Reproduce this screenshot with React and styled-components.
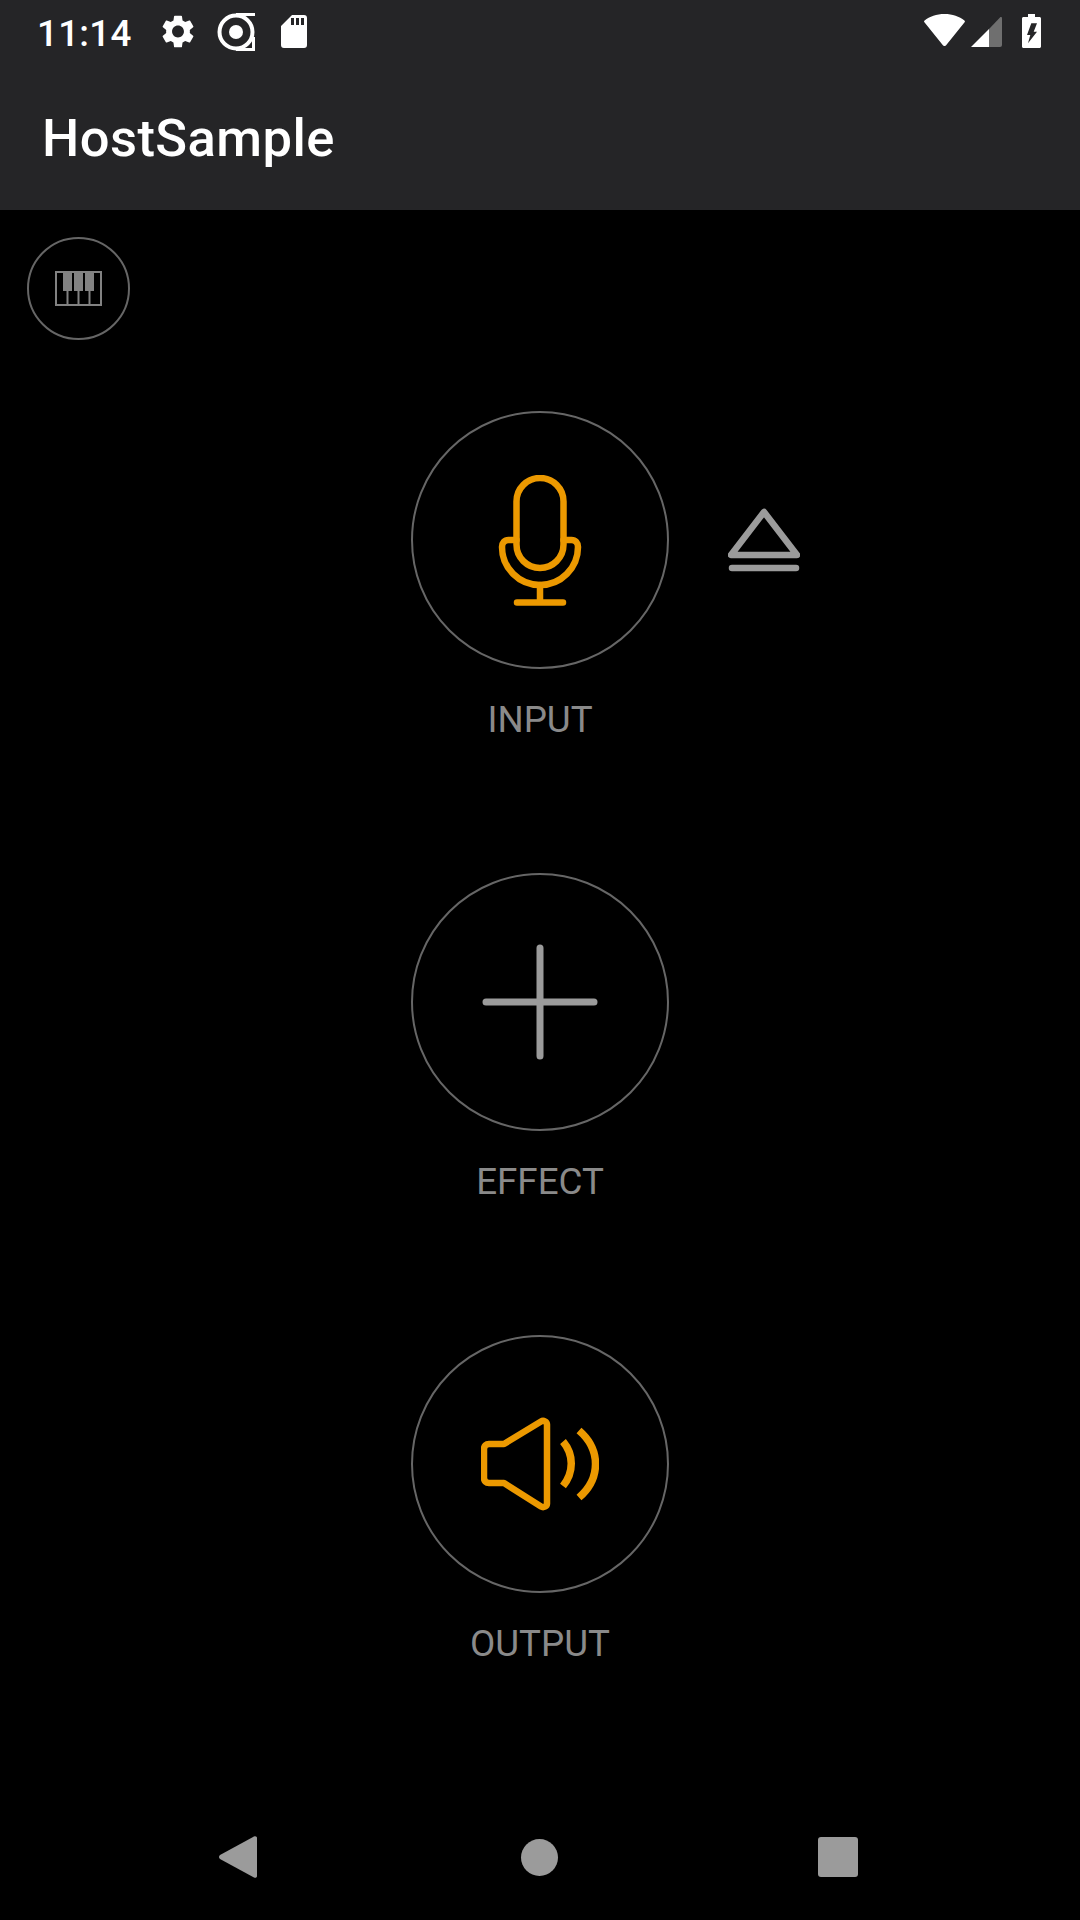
import styled, { createGlobalStyle } from 'styled-components'

const GlobalStyle = createGlobalStyle`
  html, body {
    margin: 0;
    padding: 0;
    background: #000;
  }
`

const Screen = styled.div`
  display: flex;
  flex-direction: column;
  width: 1080px;
  height: 1920px;
  overflow: hidden;
  background: #000;
  font-family: Roboto, "Liberation Sans", sans-serif;
`

const AppHeader = styled.header`
  flex: none;
  background: #252527;
  color: #fff;
`

const StatusBar = styled.div`
  display: flex;
  justify-content: space-between;
  height: 63px;
  padding: 0 39px 0 37px;
`

const StatusGroup = styled.div`
  display: flex;
  align-items: flex-start;
`

const Clock = styled.span`
  width: 93px;
  margin-top: 12px;
  font-size: 36.75px;
  line-height: 43px;
  font-weight: 500;
  letter-spacing: 0.3px;
  white-space: nowrap;
`

const StatusIcon = styled.svg`
  display: block;
  flex: none;
  margin-top: ${props => props.$top}px;
  margin-left: ${props => props.$left}px;
  fill: #fff;
`

const Toolbar = styled.div`
  display: flex;
  align-items: center;
  height: 147px;
  padding: 2px 0 0 42px;
  box-sizing: border-box;
`

const Title = styled.h1`
  margin: 0;
  font-size: 52.5px;
  font-weight: 500;
  line-height: 62px;
  letter-spacing: 0.45px;
`

const Content = styled.main`
  flex: 1;
  display: flex;
  flex-direction: column;
  min-height: 0;
`

const KeyboardButton = styled.button`
  display: flex;
  flex: none;
  align-items: center;
  justify-content: center;
  align-self: flex-start;
  box-sizing: border-box;
  width: 103px;
  height: 103px;
  margin: 27px 0 0 27px;
  padding: 0;
  background: transparent;
  border: 2px solid #666;
  border-radius: 50%;
`

const Stages = styled.div`
  display: flex;
  flex: none;
  flex-direction: column;
  gap: 131px;
  margin-top: 71px;
`

const Stage = styled.section`
  display: grid;
  grid-template-columns: 1fr 258px 1fr;
  grid-template-rows: 258px auto;
  align-items: center;
`

const RoundButton = styled.button`
  grid-column: 2;
  display: flex;
  align-items: center;
  justify-content: center;
  box-sizing: border-box;
  width: 258px;
  height: 258px;
  padding: 0;
  background: transparent;
  border: 2.5px solid #666;
  border-radius: 50%;
`

const EjectButton = styled.button`
  display: flex;
  justify-self: start;
  margin: 0 0 0 59px;
  padding: 0;
  background: transparent;
  border: 0;
`

const StageLabel = styled.div`
  grid-column: 2;
  grid-row: 2;
  margin-top: 29px;
  color: #8a8a8a;
  font-size: 36.75px;
  line-height: 44px;
  text-align: center;
`

const NavBar = styled.nav`
  display: flex;
  align-items: center;
  flex: none;
  height: 126px;
  margin-top: auto;
  padding-left: 219px;
`

const BackKey = styled.svg`
  display: block;
  width: 38px;
  height: 42px;
  fill: #9b9b9b;
`

const HomeKey = styled.span`
  width: 37px;
  height: 37px;
  margin-left: 264px;
  background: #9b9b9b;
  border-radius: 50%;
`

const RecentKey = styled.span`
  width: 40px;
  height: 40px;
  margin-left: 260px;
  background: #9b9b9b;
  border-radius: 3px;
`

const Gear = () => (
  <StatusIcon $top={15} $left={32} width="32" height="33" viewBox="2.7 2 18.6 20">
    <path d="M19.14 12.94c.04-.3.06-.61.06-.94 0-.32-.02-.64-.07-.94l2.03-1.58c.18-.14.23-.41.12-.61l-1.92-3.32c-.12-.22-.37-.29-.59-.22l-2.39.96c-.5-.38-1.03-.7-1.62-.94l-.36-2.54c-.04-.24-.24-.41-.48-.41h-3.84c-.24 0-.43.17-.47.41l-.36 2.54c-.59.24-1.13.57-1.62.94l-2.39-.96c-.22-.08-.47 0-.59.22L2.74 8.87c-.12.21-.08.47.12.61l2.03 1.58c-.05.3-.09.63-.09.94s.02.64.07.94l-2.03 1.58c-.18.14-.23.41-.12.61l1.92 3.32c.12.22.37.29.59.22l2.39-.96c.5.38 1.03.7 1.62.94l.36 2.54c.05.24.24.41.48.41h3.84c.24 0 .44-.17.47-.41l.36-2.54c.59-.24 1.13-.56 1.62-.94l2.39.96c.22.08.47 0 .59-.22l1.92-3.32c.12-.22.07-.47-.12-.61l-2.01-1.58zM12 15.6c-1.98 0-3.6-1.62-3.6-3.6s1.62-3.6 3.6-3.6 3.6 1.62 3.6 3.6-1.62 3.6-3.6 3.6z" />
  </StatusIcon>
)

const Recorder = () => (
  <StatusIcon $top={13} $left={23} width="38" height="38" viewBox="0 0 38 38">
    <circle cx="19" cy="19" r="16.500" fill="none" stroke="#fff" strokeWidth="4" />
    <path d="M19 1.500H38M19 36.500H38M36.500 24V38" fill="none" stroke="#fff" strokeWidth="3" />
    <circle cx="19" cy="19" r="7" />
  </StatusIcon>
)

const SdCard = () => (
  <StatusIcon $top={15} $left={26} width="26" height="33" viewBox="0 0 26 33">
    <path fillRule="evenodd" d="M11 0h12a3 3 0 0 1 3 3v27a3 3 0 0 1-3 3H3a3 3 0 0 1-3-3V11zM10 3v7h3V3zm5 0v7h3V3zm5 0v7h3V3z" />
  </StatusIcon>
)

const Wifi = () => (
  <StatusIcon $top={14} $left={0} width="41" height="32" viewBox="0 0 41 32">
    <path d="M20.500 0C12.500 0 5.600 2.600.6 6.500c-.7.5-.7 1.200-.2 1.800l18.500 22.900c.8 1.100 2.400 1.100 3.200 0L40.600 8.300c.5-.6.4-1.300-.2-1.800C35.400 2.600 28.500 0 20.500 0z" />
  </StatusIcon>
)

const Signal = () => (
  <StatusIcon $top={16} $left={6} width="31" height="31" viewBox="0 0 31 31">
    <path d="M0 31 18 13v18z" />
    <path d="M18 13 29 1.500c.8-.8 2-.3 2 .7V29a2 2 0 0 1-2 2H18z" fill="#6f6f6f" />
  </StatusIcon>
)

const Battery = () => (
  <StatusIcon $top={14} $left={20} width="19" height="34" viewBox="0 0 19 34">
    <path fillRule="evenodd" d="M6 0h7v3h4.500c.8 0 1.500.7 1.500 1.500V32.500c0 .8-.7 1.500-1.500 1.500H1.500C.7 34 0 33.300 0 32.500V4.500C0 3.700.7 3 1.500 3H6zM9.300 9.300 5 21h3.300L6 29.300l9-11.600h-3.300L15 9.300z" />
  </StatusIcon>
)

const PianoIcon = () => (
  <svg width="47" height="35" viewBox="0 0 47 35" fill="none">
    <rect x="1" y="1" width="45" height="33" stroke="#828282" strokeWidth="2" />
    <path d="M12.500 1v33M23.500 1v33M34.500 1v33" stroke="#828282" strokeWidth="2" />
    <path d="M8 1h9v19H8zM19 1h9v19h-9zM30 1h9v19h-9z" fill="#828282" />
  </svg>
)

const MicIcon = () => (
  <svg width="88" height="131" viewBox="0 0 88 131" fill="none" stroke="#ec9900" strokeWidth="6.500" strokeLinecap="round" strokeLinejoin="round">
    <rect x="20.500" y="3" width="47" height="90" rx="23.500" />
    <path d="M20.500 65h-8c-4 0-6.500 3-6.500 7 0 21 17 38 38 38s38-17 38-38c0-4-2.500-7-6.500-7h-8" />
    <path d="M44 110v17.500M21 127.500h46" />
  </svg>
)

const EjectIcon = () => (
  <svg width="72" height="64" viewBox="0 0 72 64" fill="none" stroke="#9b9b9b" strokeWidth="6.500" strokeLinecap="round" strokeLinejoin="round">
    <path d="M36 4 3 47h66z" />
    <path d="M4 60h64" />
  </svg>
)

const PlusIcon = () => (
  <svg width="116" height="116" viewBox="0 0 116 116" stroke="#9b9b9b" strokeWidth="7" strokeLinecap="round">
    <path d="M4 58h108M58 4v108" />
  </svg>
)

const SpeakerIcon = () => (
  <svg width="118" height="94" viewBox="0 0 118 94" fill="none" stroke="#ec9900" strokeWidth="6.500" strokeLinejoin="round">
    <path d="M8 27h15L60 4.500c2.500-1.500 6 0 6 3v79c0 3-3.500 4.500-6 3L23 66H8c-3 0-5-2-5-5V32c0-3 2-5 5-5z" />
    <path d="M82 24.500c11 13 11 31 0 44.500M98 13.500c22 19 22 48 0 67" strokeWidth="7.500" />
  </svg>
)

const stages = [
  { name: 'INPUT', icon: <MicIcon />, eject: true },
  { name: 'EFFECT', icon: <PlusIcon /> },
  { name: 'OUTPUT', icon: <SpeakerIcon /> }
]

const App = () => (
  <Screen>
    <GlobalStyle />
    <AppHeader>
      <StatusBar>
        <StatusGroup>
          <Clock>11:14</Clock>
          <Gear />
          <Recorder />
          <SdCard />
        </StatusGroup>
        <StatusGroup>
          <Wifi />
          <Signal />
          <Battery />
        </StatusGroup>
      </StatusBar>
      <Toolbar>
        <Title>HostSample</Title>
      </Toolbar>
    </AppHeader>
    <Content>
      <KeyboardButton aria-label="Keyboard">
        <PianoIcon />
      </KeyboardButton>
      <Stages>
        {stages.map(stage => (
          <Stage key={stage.name}>
            <RoundButton aria-label={stage.name}>{stage.icon}</RoundButton>
            {stage.eject && (
              <EjectButton aria-label="Eject">
                <EjectIcon />
              </EjectButton>
            )}
            <StageLabel>{stage.name}</StageLabel>
          </Stage>
        ))}
      </Stages>
    </Content>
    <NavBar>
      <BackKey viewBox="0 0 38 42">
        <path d="M35 .5 1 19c-1.300 1-1.300 3 0 4l34 18.500c1.500.8 3 0 3-1.500V2c0-1.500-1.500-2.300-3-1.500z" />
      </BackKey>
      <HomeKey />
      <RecentKey />
    </NavBar>
  </Screen>
)

export default App
